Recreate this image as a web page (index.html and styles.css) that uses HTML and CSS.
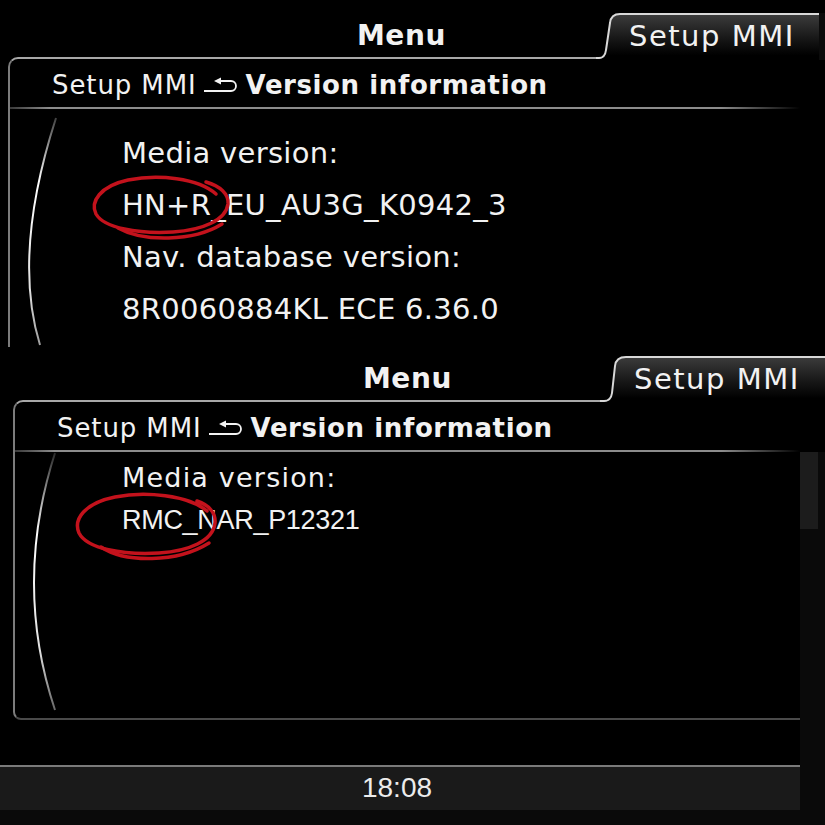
FILE: index.html
```html
<!DOCTYPE html>
<html lang="en">
<head>
<meta charset="utf-8">
<title>Setup MMI – Version information</title>
<link rel="stylesheet" href="styles.css">
</head>
<body>
<main class="page">
  <section class="screen screen-a">
    <header class="tabbar">
      <div class="menu">Menu</div>
      <div class="tab">
        <svg class="tab-shape" viewBox="0 0 229 47" preserveAspectRatio="none">
          <defs>
            <linearGradient id="tabFillA" x1="0" y1="0" x2="0" y2="1">
              <stop offset="0" stop-color="#3c3c3c"/>
              <stop offset="0.55" stop-color="#161616"/>
              <stop offset="0.9" stop-color="#000"/>
            </linearGradient>
          </defs>
          <path d="M2 46 Q9 46 10 37 L14 10 Q15 1 24 1 H223 V47 H0 Z" fill="url(#tabFillA)"/>
          <rect x="223" y="0" width="6" height="47" fill="#0b0b0b"/>
          <path d="M0 45 H3 Q9 45 10 37 L14 10 Q15 1 24 1 H223" fill="none" stroke="#d8d8d8" stroke-width="2"/>
        </svg>
        <span class="tab-label">Setup MMI</span>
      </div>
    </header>
    <div class="panel">
      <div class="crumb">
        <span>Setup MMI</span>
        <svg class="back" viewBox="0 0 34 14"><path d="M1 12 H28 A5 5 0 0 0 28 2 H17" fill="none" stroke="#f2f2f2" stroke-width="1.8"/><path d="M11 2 L18 -1.5 L18 5.5 Z" fill="#f2f2f2"/></svg>
        <b>Version information</b>
      </div>
      <div class="rule"></div>
      <div class="body">
        <svg class="arc arc-a" viewBox="0 0 60 240">
          <defs>
            <linearGradient id="arcA" x1="0" y1="0" x2="0" y2="240" gradientUnits="userSpaceOnUse">
              <stop offset="0" stop-color="#fff" stop-opacity="0.15"/>
              <stop offset="0.3" stop-color="#fff"/>
              <stop offset="0.75" stop-color="#e0e0e0"/>
              <stop offset="1" stop-color="#9a9a9a"/>
            </linearGradient>
          </defs>
          <path d="M46 9 Q2 145 30 236" fill="none" stroke="url(#arcA)" stroke-width="2"/>
        </svg>
        <svg class="ring ring-a" viewBox="0 0 150 72">
          <path d="M128 22 C110 6 70 2 40 8 C12 14 2 30 8 42 C16 56 50 62 85 60 C115 58 138 48 140 32 C141 22 132 14 118 10" />
          <path d="M30 56 C55 70 105 70 134 52" />
        </svg>
        <p>Media version:</p>
        <p>HN+R_EU_AU3G_K0942_3</p>
        <p>Nav. database version:</p>
        <p>8R0060884KL ECE 6.36.0</p>
      </div>
    </div>
  </section>

  <section class="screen screen-b">
    <header class="tabbar">
      <div class="menu">Menu</div>
      <div class="tab">
        <svg class="tab-shape" viewBox="0 0 225 47" preserveAspectRatio="none">
          <defs>
            <linearGradient id="tabFillB" x1="0" y1="0" x2="0" y2="1">
              <stop offset="0" stop-color="#3c3c3c"/>
              <stop offset="0.55" stop-color="#161616"/>
              <stop offset="0.9" stop-color="#000"/>
            </linearGradient>
          </defs>
          <path d="M3 46 Q11 46 12 37 L15 10 Q16 1 26 1 H225 V47 H0 Z" fill="url(#tabFillB)"/>
          <path d="M0 45 H4 Q11 45 12 37 L15 10 Q16 1 26 1 H225" fill="none" stroke="#d8d8d8" stroke-width="2"/>
        </svg>
        <span class="tab-label">Setup MMI</span>
      </div>
    </header>
    <div class="stage">
      <div class="main-col">
        <div class="panel">
          <div class="crumb">
            <span>Setup MMI</span>
            <svg class="back" viewBox="0 0 34 14"><path d="M1 12 H28 A5 5 0 0 0 28 2 H17" fill="none" stroke="#f2f2f2" stroke-width="1.8"/><path d="M11 2 L18 -1.5 L18 5.5 Z" fill="#f2f2f2"/></svg>
            <b>Version information</b>
          </div>
          <div class="rule"></div>
          <div class="body">
            <svg class="arc arc-b" viewBox="0 0 60 266">
              <defs>
                <linearGradient id="arcB" x1="0" y1="0" x2="0" y2="266" gradientUnits="userSpaceOnUse">
                  <stop offset="0" stop-color="#fff" stop-opacity="0.15"/>
                  <stop offset="0.3" stop-color="#fff"/>
                  <stop offset="0.75" stop-color="#e0e0e0"/>
                  <stop offset="1" stop-color="#9a9a9a" stop-opacity="0.6"/>
                </linearGradient>
              </defs>
              <path d="M40 1 Q-2 132 40 258" fill="none" stroke="url(#arcB)" stroke-width="2"/>
            </svg>
            <svg class="ring ring-b" viewBox="0 0 150 72">
              <path d="M134 20 C115 4 72 0 42 6 C12 12 0 28 6 42 C14 58 50 64 86 62 C116 60 140 50 142 32 C143 22 136 14 124 10" />
              <path d="M28 56 C52 72 104 72 136 52" />
            </svg>
            <p class="label-b">Media version:</p>
            <p class="value-b">RMC_NAR_P12321</p>
          </div>
        </div>
        <div class="gap"></div>
        <footer class="status">18:08</footer>
        <div class="floor"></div>
      </div>
      <aside class="strip"><div class="thumb"></div></aside>
    </div>
  </section>
</main>
</body>
</html>
```

FILE: styles.css
```css
* { box-sizing: border-box; margin: 0; padding: 0; }
html, body { background: #000; }
body {
  width: 825px;
  height: 825px;
  overflow: hidden;
  font-family: "DejaVu Sans", "Noto Sans", sans-serif;
  color: #f2f2f2;
}

.screen { position: relative; overflow: hidden; }
.screen-a { height: 347px; }
.screen-b { height: 478px; }

/* header with tabs */
.tabbar { display: flex; align-items: flex-end; height: 57px; }
.screen-b .tabbar { height: 53px; }

.menu {
  flex: 1;
  height: 44px;
  padding-top: 2px;
  padding-right: 150px;
  text-align: right;
  font-weight: bold;
  font-size: 28px;
  letter-spacing: 0.6px;
  line-height: 42px;
}
.screen-b .menu { padding-right: 148px; }

.tab {
  position: relative;
  width: 229px;
  height: 44px;
  padding-left: 33px;
  padding-top: 2px;
  font-size: 29px;
  letter-spacing: 1.5px;
  line-height: 42px;
  white-space: nowrap;
  z-index: 2;
}
.screen-b .tab { width: 225px; padding-left: 34px; }
.tab-shape {
  position: absolute;
  left: 0;
  top: 0;
  width: 100%;
  height: 47px;
}
.tab-label { position: relative; }

/* panel */
.panel {
  border-top: 2px solid #a8a8a8;
  border-left: 2px solid #7c7c7c;
  border-top-left-radius: 10px;
}
.screen-a .panel { margin-left: 8px; margin-right: 6px; height: 290px; }
.screen-b .panel {
  margin-left: 13px;
  height: 320px;
  border-bottom: 2px solid #4a4a4a;
  border-bottom-left-radius: 8px;
}

.crumb {
  display: flex;
  align-items: center;
  height: 48px;
  padding-top: 4px;
  padding-left: 42px;
  font-size: 26px;
  letter-spacing: 0.9px;
  white-space: nowrap;
}
.crumb b { font-weight: bold; letter-spacing: 0.6px; }
.back { width: 34px; height: 14px; margin: 2px 9px 0 6px; overflow: visible; }

.rule {
  height: 2px;
  background: linear-gradient(90deg, #3a3a3a, #8c8c8c 5%, #8c8c8c 90%, rgba(140,140,140,0));
}
.screen-a .rule { margin-right: 19px; }

.body {
  position: relative;
  padding: 18px 0 0 112px;
  font-size: 29px;
  line-height: 52px;
  letter-spacing: 0.3px;
  white-space: nowrap;
}
.screen-b .body { padding: 5px 0 0 107px; line-height: 42px; }

.label-b { font-size: 27px; letter-spacing: 1.2px; }
.value-b {
  font-family: "Liberation Sans", Arial, sans-serif;
  font-size: 27px;
  letter-spacing: -0.3px;
}

.arc { position: absolute; left: 0; top: 0; width: 60px; overflow: visible; }
.arc-a { height: 240px; }
.arc-b { height: 266px; }

.ring {
  position: absolute;
  width: 150px;
  height: 72px;
  fill: none;
  stroke: #c3121c;
  stroke-width: 3.5;
  stroke-linecap: round;
  overflow: visible;
}
.ring-a { left: 78px; top: 63px; }
.ring-b { left: 58px; top: 39px; }

/* second screen lower part */
.stage { display: flex; }
.main-col { width: 800px; }
.gap { height: 45px; }
.status {
  height: 45px;
  border-top: 2px solid #7a7a7a;
  background: #1a1a1a;
  padding-right: 6px;
  text-align: center;
  font-family: "Liberation Sans", Arial, sans-serif;
  font-size: 28px;
  line-height: 41px;
  color: #ececec;
}
.floor { height: 15px; background: #0a0a0a; }

.strip {
  width: 25px;
  margin-top: 52px;
  background: #0a0a0a;
}
.thumb { width: 18px; height: 77px; background: #1c1c1c; }
```
